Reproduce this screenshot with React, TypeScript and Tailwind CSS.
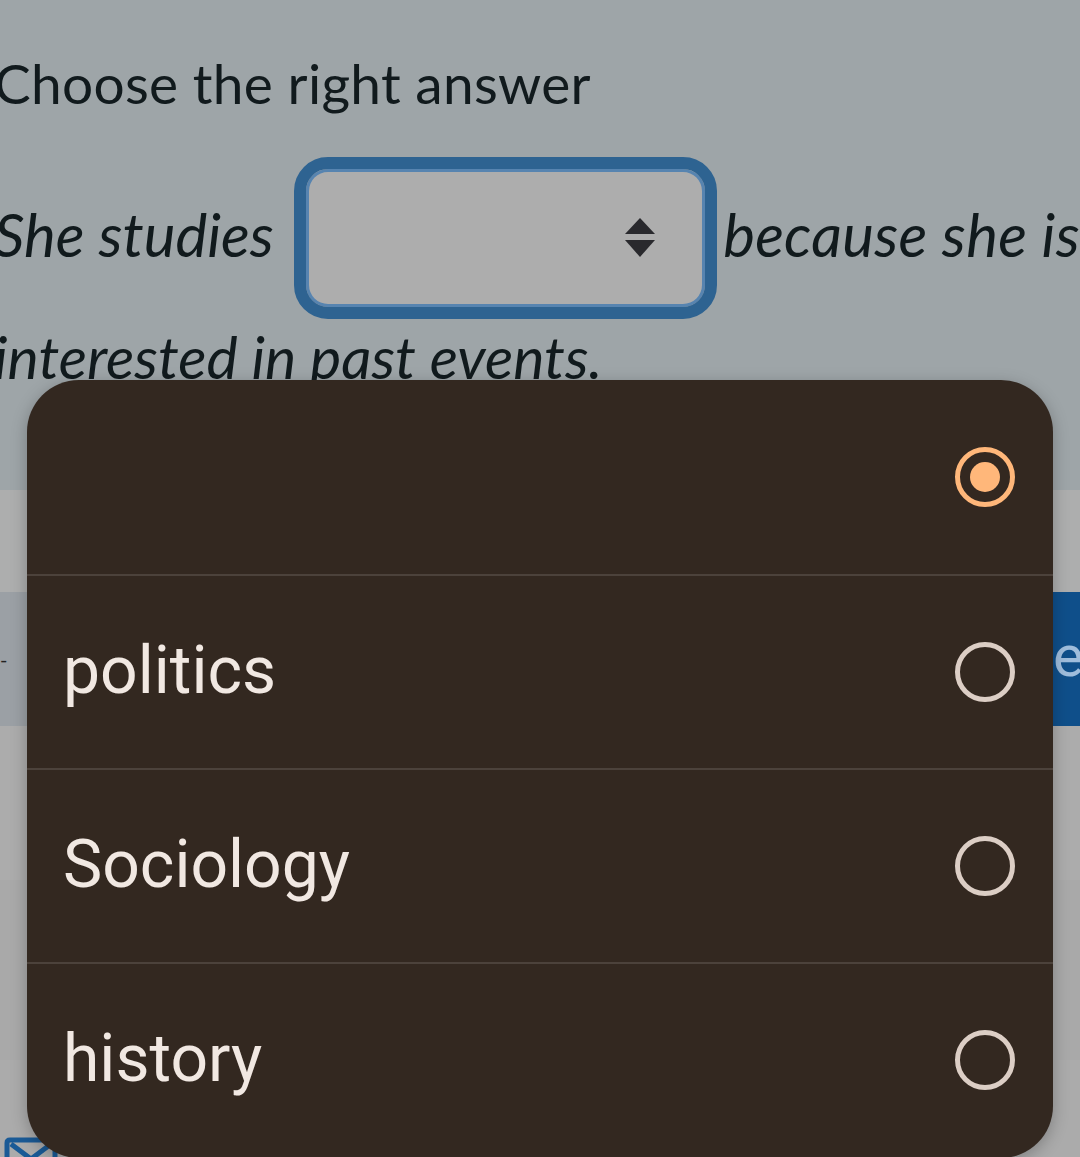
import React from 'react';

const options = [
  { label: '', selected: true },
  { label: 'politics', selected: false },
  { label: 'Sociology', selected: false },
  { label: 'history', selected: false },
];

const Radio: React.FC<{ selected: boolean }> = ({ selected }) =>
  selected ? (
    <div className="w-[60px] h-[60px] rounded-full border-[5px] border-[#ffb77a] flex items-center justify-center">
      <div className="w-[30px] h-[30px] rounded-full bg-[#ffb77a]" />
    </div>
  ) : (
    <div className="w-[60px] h-[60px] rounded-full border-[5px] border-[#dccec5]" />
  );

const SelectArrows = () => (
  <svg width="32" height="42" viewBox="0 0 32 42" className="text-[#29292d]">
    <path d="M16 1 L31 17 L1 17 Z" fill="currentColor" />
    <path d="M1 23 L31 23 L16 40 Z" fill="currentColor" />
  </svg>
);

const App: React.FC = () => {
  return (
    <div className="relative w-[1080px] h-[1157px] overflow-hidden bg-[#9ea5a8] font-['Lato',sans-serif] text-[#111a1d]">
      {/* Question text */}
      <div className="h-[490px] -ml-[6px] pt-[48px]">
        <h1 className="text-[55px] leading-[70px] tracking-[0.3px]">Choose the right answer</h1>

        <div className="mt-[39px] flex items-center whitespace-nowrap italic text-[60px]">
          <span className="pb-[8px]">She studies</span>
          <div className="ml-[20px] mr-[6px] w-[426px] h-[162px] rounded-[34px] border-[12px] border-[#2e6391] shadow-[inset_0_0_0_3px_#5784b0] bg-[#adadad] flex items-center justify-end pr-[49px]">
            <SelectArrows />
          </div>
          <span className="pb-[8px] tracking-[0.3px]">because she is</span>
        </div>

        <div className="mt-[2px] italic text-[59px] leading-[72px] whitespace-nowrap">interested in past events.</div>
      </div>

      {/* Page behind the scrim */}
      <div className="h-[102px] bg-[#adaeae]" />
      <div className="h-[134px] flex">
        <div className="flex-1 bg-[#9ba0a5] flex items-center text-[20px] text-[#222]">-</div>
        <div className="w-[27px] bg-[#0f4f8a] flex items-center text-[58px] font-['Roboto',sans-serif] text-[#9fbddc] leading-none pb-[6px]">e</div>
      </div>
      <div className="h-[154px] bg-[#acacac]" />
      <div className="h-[180px] bg-[#a9a9a9]" />
      <div className="h-[97px] bg-[#ababab] flex items-end pl-[3px]">
        <svg width="56" height="20" viewBox="0 0 56 20">
          <path d="M4 20 V6 Q4 3 7 3 H49 Q52 3 52 6 V20" fill="none" stroke="#1a5a96" strokeWidth="5" />
          <path d="M8 7 L28 22 L48 7" fill="none" stroke="#1a5a96" strokeWidth="5" />
        </svg>
      </div>

      {/* Dropdown dialog */}
      <div className="absolute left-[27px] top-[380px] w-[1026px] h-[778px] rounded-[52px] bg-[#332820] shadow-[0_4px_16px_rgba(0,0,0,0.25)] overflow-hidden flex flex-col font-['Roboto',sans-serif]">
        {options.map((o, i) => (
          <div
            key={i}
            className={`h-[194px] flex items-center justify-between pl-[36px] pr-[38px] ${i > 0 ? 'border-t-2 border-[#4c423b]' : ''}`}
          >
            <span className="text-[66px] text-[#f1e8e2] leading-none pb-[2px]">{o.label}</span>
            <Radio selected={o.selected} />
          </div>
        ))}
      </div>
    </div>
  );
};

export default App;
